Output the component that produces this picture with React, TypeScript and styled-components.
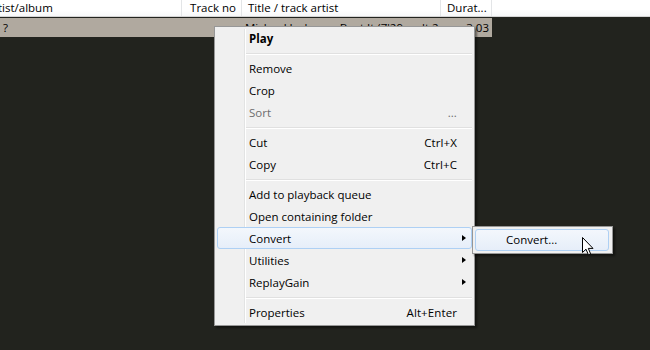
import { styled, createGlobalStyle } from "styled-components";

const GlobalStyle = createGlobalStyle`
  html, body {
    margin: 0;
    padding: 0;
    background: #22231e;
  }
  body {
    font-family: "Open Sans", "Noto Sans", sans-serif;
    font-size: 11.5px;
    color: #000;
  }
`;

interface Column {
  title: string;
  width: number;
  align: "left" | "right";
}

const columns: Column[] = [
  { title: "Artist/album", width: 182, align: "left" },
  { title: "Track no", width: 60, align: "right" },
  { title: "Title / track artist", width: 199, align: "left" },
  { title: "Durat...", width: 51, align: "left" },
];

const rowCells = ["?", "", "Michael Jackson - Beat It (7'29... ult 2", "3:03"];

interface MenuEntry {
  label?: string;
  shortcut?: string;
  bold?: boolean;
  disabled?: boolean;
  submenu?: boolean;
  active?: boolean;
  separator?: boolean;
}

const entries: MenuEntry[] = [
  { label: "Play", bold: true },
  { separator: true },
  { label: "Remove" },
  { label: "Crop" },
  { label: "Sort", shortcut: "...", disabled: true },
  { separator: true },
  { label: "Cut", shortcut: "Ctrl+X" },
  { label: "Copy", shortcut: "Ctrl+C" },
  { separator: true },
  { label: "Add to playback queue" },
  { label: "Open containing folder" },
  { label: "Convert", submenu: true, active: true },
  { label: "Utilities", submenu: true },
  { label: "ReplayGain", submenu: true },
  { separator: true },
  { label: "Properties", shortcut: "Alt+Enter" },
];

const App = () => {
  return (
    <Screen>
      <GlobalStyle />
      <Header>
        {columns.map((c, i) => (
          <HeaderCell key={c.title} width={c.width} align={c.align} first={i === 0}>
            {c.title}
          </HeaderCell>
        ))}
        <HeaderFill />
      </Header>
      <Row>
        {columns.map((c, i) => (
          <RowCell key={c.title} width={c.width} align={i === 3 ? "right" : "left"}>
            {rowCells[i]}
          </RowCell>
        ))}
      </Row>

      <Menu>
        {entries.map((e, i) =>
          e.separator ? (
            <Separator key={i} />
          ) : (
            <Item key={i} active={e.active} disabled={e.disabled}>
              <Label bold={e.bold}>{e.label}</Label>
              {e.shortcut && <Shortcut>{e.shortcut}</Shortcut>}
              <ArrowSlot>{e.submenu && <Arrow />}</ArrowSlot>
              {e.active && (
                <SubMenu>
                  <SubItem>Convert...</SubItem>
                </SubMenu>
              )}
            </Item>
          )
        )}
      </Menu>

      <Cursor width="12" height="19" viewBox="0 0 12 19">
        <path
          d="M0.5 0.5 L0.5 15.5 L4 12.2 L6.4 17.8 L8.6 16.8 L6.3 11.4 L11 11.4 Z"
          fill="#fff"
          stroke="#000"
          strokeWidth="1"
          strokeLinejoin="round"
        />
      </Cursor>
    </Screen>
  );
};

const Screen = styled.div`
  position: relative;
  width: 650px;
  height: 350px;
  overflow: hidden;
  background: #22231e;
`;

const Header = styled.div`
  display: flex;
  height: 16px;
  background: linear-gradient(#ffffff 60%, #f7f8f9);
  border-bottom: 1px solid #d5d5d5;
`;

const HeaderCell = styled.div<{ width: number; align: string; first: boolean }>`
  width: ${(p) => p.width}px;
  flex-shrink: 0;
  box-sizing: border-box;
  border-right: 1px solid #e3e5e7;
  padding: 0 5px 0 ${(p) => (p.first ? "0" : "6px")};
  text-align: ${(p) => p.align};
  line-height: 16px;
  white-space: nowrap;
  overflow: hidden;
  text-indent: ${(p) => (p.first ? "-14px" : "0")};
`;

const HeaderFill = styled.div`
  flex: 1;
`;

const Row = styled.div`
  display: flex;
  width: 492px;
  height: 19px;
  margin-top: 1px;
  background: #b0a99f;
`;

const RowCell = styled.div<{ width: number; align: string }>`
  width: ${(p) => p.width}px;
  flex-shrink: 0;
  box-sizing: border-box;
  padding: 0 3px 0 3px;
  text-align: ${(p) => p.align};
  line-height: 20px;
  white-space: nowrap;
  overflow: hidden;
`;

const Menu = styled.div`
  position: absolute;
  left: 214px;
  top: 26px;
  width: 261px;
  box-sizing: border-box;
  padding: 0 2px 2px 2px;
  background: #f0f0f0;
  border: 1px solid #979797;
  box-shadow: 2px 2px 2px rgba(0, 0, 0, 0.45);

  &::before {
    content: "";
    position: absolute;
    left: 29px;
    top: 2px;
    bottom: 2px;
    width: 1px;
    background: #e2e3e3;
    box-shadow: 1px 0 0 #ffffff;
  }
`;

const Item = styled.div<{ active?: boolean; disabled?: boolean }>`
  position: relative;
  display: flex;
  align-items: center;
  height: 22px;
  box-sizing: border-box;
  padding-left: 32px;
  border-radius: 3px;
  border: 1px solid ${(p) => (p.active ? "#aed0f4" : "transparent")};
  background: ${(p) =>
    p.active ? "linear-gradient(#f3f7fc, #e6eef9)" : "transparent"};
  color: ${(p) => (p.disabled ? "#6d6d6d" : "#000")};
  white-space: nowrap;
`;

const Label = styled.span<{ bold?: boolean }>`
  flex: 1;
  font-weight: ${(p) => (p.bold ? 700 : 400)};
  margin-left: -1px;
`;

const Shortcut = styled.span`
  letter-spacing: 0.1px;
`;

const ArrowSlot = styled.span`
  width: 14px;
  display: flex;
  justify-content: flex-start;
  padding-left: 5px;
  box-sizing: border-box;
`;

const Arrow = styled.span`
  width: 0;
  height: 0;
  border-top: 3.5px solid transparent;
  border-bottom: 3.5px solid transparent;
  border-left: 4px solid #000;
`;

const Separator = styled.div`
  height: 8px;
  display: flex;
  align-items: center;
  margin-left: 28px;

  &::after {
    content: "";
    flex: 1;
    height: 1px;
    background: #e0e0e0;
    box-shadow: 0 1px 0 #ffffff;
  }
`;

const SubMenu = styled.div`
  position: absolute;
  left: 254px;
  top: -2px;
  width: 141px;
  box-sizing: border-box;
  padding: 2px 3px 2px 2px;
  background: #f0f0f0;
  border: 1px solid #979797;
  box-shadow: 2px 2px 2px rgba(0, 0, 0, 0.45);

  &::before {
    content: "";
    position: absolute;
    left: 28px;
    top: 2px;
    bottom: 2px;
    width: 1px;
    background: #e2e3e3;
    box-shadow: 1px 0 0 #ffffff;
  }
`;

const SubItem = styled.div`
  position: relative;
  height: 22px;
  line-height: 19px;
  box-sizing: border-box;
  padding-left: 30px;
  border-radius: 3px;
  border: 1px solid #aed0f4;
  background: linear-gradient(#f3f7fc, #e6eef9);
  color: #000;
`;

const Cursor = styled.svg`
  position: absolute;
  left: 582px;
  top: 237px;
`;

export default App;
